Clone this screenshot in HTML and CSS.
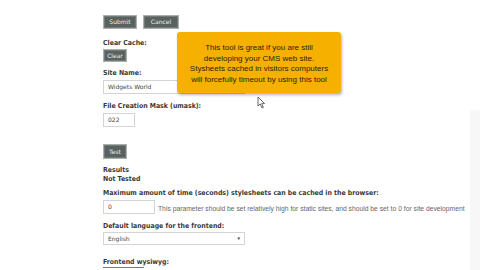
FILE: index.html
```html
<!DOCTYPE html>
<html>
<head>
<meta charset="utf-8">
<link rel="stylesheet" href="styles.css">
</head>
<body>
<div class="page">
  <main class="form">
    <div class="btn-row">
      <span class="btn btn-submit">Submit</span>
      <span class="btn btn-cancel">Cancel</span>
    </div>
    <div class="field f-cache tight">
      <div class="label">Clear Cache:</div>
      <span class="btn btn-clear">Clear</span>
    </div>
    <div class="field f-site">
      <div class="label">Site Name:</div>
      <div class="input input-wide">Widgets World</div>
    </div>
    <div class="field f-mask">
      <div class="label">File Creation Mask (umask):</div>
      <div class="input input-small">022</div>
    </div>
    <div class="field f-test">
      <span class="btn btn-test">Test</span>
    </div>
    <div class="field f-results">
      <div class="label lbl-flat">Results</div>
      <div class="label lbl-flat">Not Tested</div>
    </div>
    <div class="field f-max">
      <div class="label">Maximum amount of time (seconds) stylesheets can be cached in the browser:</div>
      <div class="inline-row">
        <div class="input input-mid">0</div>
        <span class="help">This parameter should be set relatively high for static sites, and should be set to 0 for site development</span>
      </div>
    </div>
    <div class="field f-lang tight">
      <div class="label">Default language for the frontend:</div>
      <div class="input select"><span>English</span><span class="arrow">&#9662;</span></div>
    </div>
    <div class="field f-wys">
      <div class="label label-under">Frontend wysiwyg:</div>
    </div>
  </main>
  <aside class="side-strip"></aside>

  <div class="tooltip">This tool is great if you are still<br>developing your CMS web site.<br>Stysheets cached in visitors computers<br>will forcefully timeout by using this tool</div>

  <svg class="cursor" width="9" height="13" viewBox="0 0 9 13">
    <path d="M1 1 L1 10 L3.2 8 L5 12 L6.4 11.4 L4.6 7.6 L7.6 7.6 Z" fill="#fff" stroke="#444" stroke-width="0.8" stroke-linejoin="round"/>
  </svg>
</div>
</body>
</html>
```

FILE: styles.css
```css
html, body {
  margin: 0;
  padding: 0;
  background: #ffffff;
}
.page {
  position: relative;
  width: 480px;
  height: 270px;
  overflow: hidden;
  display: flex;
  font-family: "DejaVu Sans Condensed", "DejaVu Sans", sans-serif;
  color: #333;
}
.form {
  flex: 1;
  padding: 15px 0 0 103px;
}
.side-strip {
  width: 10px;
  margin-top: 110px;
  background: #f7f7f7;
}
.btn-row {
  display: flex;
  gap: 6px;
}
.btn {
  display: block;
  box-sizing: border-box;
  height: 14px;
  line-height: 12px;
  background: #59625f;
  border: 1px solid #aab0ae;
  box-shadow: inset 0 0 0 1px #737b79;
  color: #e8eeee;
  font-family: "DejaVu Sans", sans-serif;
  font-size: 6px;
  text-align: center;
}
.btn-submit {
  width: 34px;
}
.btn-cancel {
  width: 36px;
}
.btn-clear {
  width: 24px;
  height: 13px;
  line-height: 11px;
}
.btn-test {
  width: 24px;
  height: 15px;
  line-height: 13px;
}
.field {
  display: flex;
  flex-direction: column;
  align-items: flex-start;
}
.label {
  font-weight: bold;
  font-size: 6.9px;
  line-height: 9px;
  color: #383838;
  margin-bottom: 2px;
}
.tight .label {
  margin-bottom: 1px;
}
.label.lbl-flat {
  margin-bottom: 0;
}
.f-cache { margin-top: 10px; }
.f-site { margin-top: 7px; }
.f-mask { margin-top: 8px; }
.f-test { margin-top: 17px; }
.f-results { margin-top: 7px; }
.f-max { margin-top: 5px; }
.f-lang { margin-top: 8px; }
.f-wys { margin-top: 13px; }
.input {
  box-sizing: border-box;
  height: 14px;
  line-height: 12px;
  border: 1px solid #d4d4d4;
  padding: 0 4px;
  font-family: "DejaVu Sans", sans-serif;
  font-size: 6px;
  color: #444;
  background: #fff;
}
.input-wide {
  width: 142px;
}
.input-small {
  width: 32px;
}
.input-mid {
  width: 52px;
}
.inline-row {
  display: flex;
  align-items: center;
  gap: 3px;
}
.help {
  font-family: "Liberation Sans", Arial, sans-serif;
  font-size: 6.75px;
  color: #666;
  line-height: 8px;
  padding-top: 4px;
}
.select {
  width: 142px;
  height: 13px;
  line-height: 11px;
  display: flex;
  justify-content: space-between;
}
.arrow {
  font-size: 5px;
  color: #333;
}
.label-under {
  padding-bottom: 1px;
  background: linear-gradient(#777, #777) no-repeat 0 100% / 41px 1px;
}
.tooltip {
  position: absolute;
  left: 177px;
  top: 32px;
  width: 164px;
  height: 61px;
  box-sizing: border-box;
  padding-top: 11px;
  background: #f6b100;
  border-radius: 3px;
  box-shadow: 1px 2px 3px rgba(0, 0, 0, 0.3);
  font-family: "Liberation Sans", Arial, sans-serif;
  font-size: 8px;
  line-height: 10.6px;
  color: #2a2200;
  text-align: center;
}
.cursor {
  position: absolute;
  left: 257px;
  top: 96px;
}
```
